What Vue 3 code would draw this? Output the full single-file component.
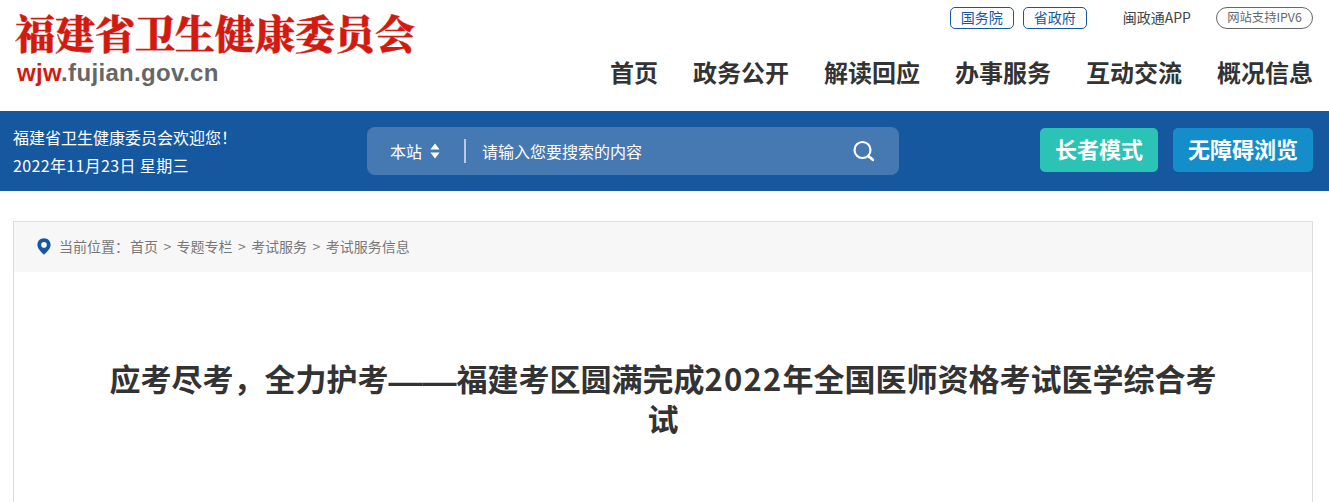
<template>
  <div class="page">
    <header class="top">
      <div class="brand">
        <div class="brand-name">福建省卫生健康委员会</div>
        <div class="brand-url"><span class="red">wjw</span><span>.fujian.gov.cn</span></div>
      </div>
      <div class="top-right">
        <div class="links">
          <a class="tag">国务院</a>
          <a class="tag second">省政府</a>
          <a class="app">闽政通APP</a>
          <a class="ipv6">网站支持IPV6</a>
        </div>
        <nav class="nav">
          <a v-for="item in navItems" :key="item">{{ item }}</a>
        </nav>
      </div>
    </header>

    <section class="band">
      <div class="welcome">
        <p>福建省卫生健康委员会欢迎您！</p>
        <p class="date">2022年11月23日 星期三</p>
      </div>
      <div class="search">
        <span class="scope">本站</span>
        <svg class="updown" width="10" height="16" viewBox="0 0 10 16">
          <path d="M5 0.5 9.6 6.5H0.4Z M0.4 9.5H9.6L5 15.5Z" fill="#fff" />
        </svg>
        <span class="divider"></span>
        <span class="placeholder">请输入您要搜索的内容</span>
        <svg class="glass" width="24" height="24" viewBox="0 0 24 24" fill="none" stroke="#fff">
          <circle cx="10.5" cy="11" r="8" stroke-width="2.2" />
          <path d="M16.6 17.2 20.8 20.8" stroke-width="2.6" stroke-linecap="round" />
        </svg>
      </div>
      <div class="modes">
        <a class="mode elder">长者模式</a>
        <a class="mode access">无障碍浏览</a>
      </div>
    </section>

    <main class="article">
      <div class="crumbs">
        <svg class="pin" width="14" height="17" viewBox="0 0 14 17">
          <path
            fill-rule="evenodd"
            fill="#16589f"
            d="M7 0.3C3.2 0.3 0.4 3.1 0.4 6.8 0.4 10.8 4.4 14.4 7 16.8 9.6 14.4 13.6 10.8 13.6 6.8 13.6 3.1 10.8 0.3 7 0.3ZM7 4.1A2.8 2.8 0 1 1 7 9.7 2.8 2.8 0 1 1 7 4.1Z"
          />
        </svg>
        <span class="crumb-label">当前位置：</span>
        <template v-for="(c, i) in crumbs" :key="c">
          <span v-if="i" class="sep">&gt;</span>
          <a>{{ c }}</a>
        </template>
      </div>
      <h1 class="title"><span>应考尽考，全力护考</span><span class="dash">——</span><span>福建考区圆满完成</span><span class="year">2022</span><span>年全国医师资格考试医学综合考</span><br /><span>试</span></h1>
    </main>
  </div>
</template>

<script setup>
const navItems = ['首页', '政务公开', '解读回应', '办事服务', '互动交流', '概况信息']
const crumbs = ['首页', '专题专栏', '考试服务', '考试服务信息']
</script>

<style>
html,
body {
  margin: 0;
  background: #fff;
  overflow: hidden;
}
</style>

<style scoped>
.page {
  height: 502px;
  overflow: hidden;
  font-family: "Noto Sans CJK SC", "Noto Sans", sans-serif;
  color: #333;
}
p {
  margin: 0;
}
.top {
  height: 111px;
  display: flex;
  justify-content: space-between;
  padding: 0 16px 0 15px;
}
.brand-name {
  margin-top: 7px;
  font-family: "Noto Serif CJK SC", "Noto Sans CJK SC", serif;
  font-weight: 900;
  font-size: 40px;
  line-height: 50px;
  color: #d31a10;
  -webkit-text-stroke: 0.4px #d31a10;
}
.brand-url {
  margin: 3px 0 0 2px;
  font-family: "Liberation Sans", sans-serif;
  font-weight: 700;
  font-size: 24px;
  line-height: 26px;
  letter-spacing: 0.33px;
  color: #666;
}
.red {
  color: #d31a10;
}
.top-right {
  display: flex;
  flex-direction: column;
  align-items: flex-end;
}
.links {
  display: flex;
  align-items: center;
  margin-top: 7px;
  font-size: 14px;
}
.tag {
  box-sizing: border-box;
  width: 64px;
  height: 22px;
  line-height: 19px;
  text-align: center;
  border: 1px solid #16589f;
  border-radius: 5px;
  color: #16589f;
}
.second {
  margin-left: 9px;
}
.app {
  margin: 0 0 2px 36px;
  color: #444;
  line-height: 20px;
}
.ipv6 {
  box-sizing: border-box;
  margin-left: 25px;
  width: 97px;
  height: 22px;
  line-height: 19px;
  text-align: center;
  border: 1px solid #666;
  border-radius: 11px;
  color: #666;
  font-size: 12.3px;
}
.nav {
  display: flex;
  gap: 35px;
  margin-top: 26px;
  font-size: 24px;
  font-weight: 700;
  line-height: 34px;
  color: #333;
}
.band {
  height: 80px;
  background: #16589f;
  display: flex;
  align-items: center;
  padding: 0 16px 0 13px;
  color: #fff;
}
.welcome {
  width: 354px;
  font-size: 16px;
  line-height: 28px;
}
.date {
  letter-spacing: 0.35px;
}
.search {
  box-sizing: border-box;
  width: 532px;
  height: 48px;
  padding: 0 23px;
  display: flex;
  align-items: center;
  background: #4678b2;
  border-radius: 8px;
  font-size: 16px;
}
.updown {
  margin-left: 8px;
}
.divider {
  width: 2px;
  height: 24px;
  margin: 0 16px 0 24px;
  background: #b9cbe0;
}
.placeholder {
  flex: 1;
}
.modes {
  margin: 0 0 2px auto;
  display: flex;
  gap: 15px;
}
.mode {
  height: 44px;
  line-height: 40px;
  text-align: center;
  border-radius: 5px;
  font-size: 22px;
  font-weight: 700;
  color: #fff;
}
.elder {
  width: 118px;
  background: #2bc3b5;
}
.access {
  width: 140px;
  background: #138ecb;
}
.article {
  box-sizing: border-box;
  margin: 30px 16px 0 13px;
  height: 300px;
  border: 1px solid #ddd;
  border-bottom: 0;
}
.crumbs {
  box-sizing: border-box;
  height: 50px;
  padding: 0 0 2px 23px;
  display: flex;
  align-items: center;
  background: #f7f7f7;
  font-size: 14px;
  color: #777;
}
.pin {
  margin-right: 8px;
}
.crumb-label {
  margin-right: 1px;
}
.sep {
  margin: 0 5.4px;
}
.title {
  margin: 86px 90px 0;
  text-align: center;
  font-size: 31px;
  font-weight: 700;
  line-height: 40px;
  color: #333;
}
.dash {
  font-family: "Liberation Sans", sans-serif;
  font-size: 34px;
  line-height: 1;
  vertical-align: -2px;
}
.year {
  letter-spacing: 1.2px;
}
</style>
